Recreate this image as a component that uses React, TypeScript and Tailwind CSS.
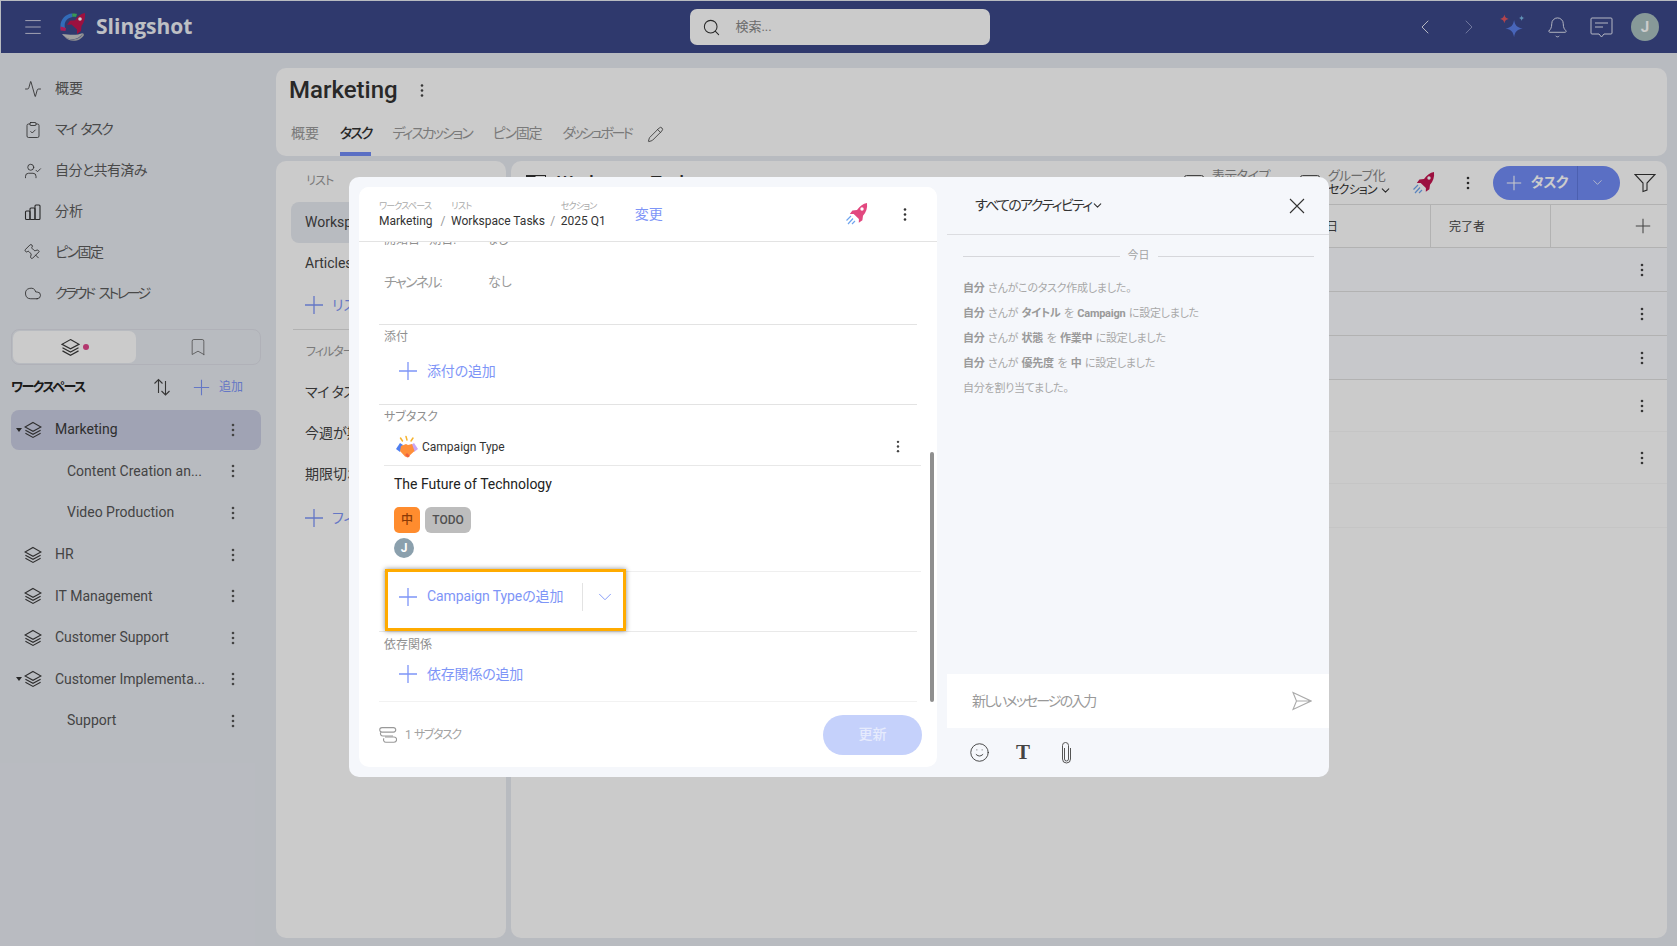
import React from "react";
import { Activity, ClipboardCheck, UserCheck, Pin, Cloud, Smile, Bell, Search, ChevronLeft, ChevronRight, ChevronDown, Pencil, Bookmark, Menu } from "lucide-react";

const Dots = ({ color = "#444", h = 14 }: { color?: string; h?: number }) => (
  <svg width="4" height={h} viewBox="0 0 4 14" className="shrink-0">
    <circle cx="2" cy="2" r="1.3" fill={color} />
    <circle cx="2" cy="7" r="1.3" fill={color} />
    <circle cx="2" cy="12" r="1.3" fill={color} />
  </svg>
);

const Plus = ({ size = 20, color = "#7e95f7" }: { size?: number; color?: string }) => (
  <svg width={size} height={size} viewBox="0 0 20 20" className="shrink-0">
    <path d="M10 1v18M1 10h18" stroke={color} strokeWidth="1.3" fill="none" />
  </svg>
);

const Layers = ({ size = 18 }: { size?: number }) => (
  <svg width={size} height={size} viewBox="0 0 18 18" fill="none" stroke="#3a3a3a" strokeWidth="1.1" className="shrink-0">
    <path d="M9 1.5 17 6 9 10.3 1 6Z" />
    <path d="M1.4 9.2 9 13.3l7.6-4.1" />
    <path d="M1.4 12.2 9 16.4l7.6-4.2" />
  </svg>
);

const Rocket = ({ body = "#e2487f" }: { body?: string }) => (
  <svg width="24" height="24" viewBox="0 0 24 24" className="shrink-0">
    <path d="M22 1c.6 5-.8 9.6-4 12.7l-.6 4.6-3.6 2.5.1-3.9-5.2-5-3.9.1 2.6-3.6 4.6-.5C15.200 4 18 1.600 22 1Z" fill={body} />
    <circle cx="17" cy="7" r="1.700" fill="#fff" />
    <path d="M6 14 1.500 18.500M8 16.500 3 22M10 19l-3 3" stroke="#6fa5ee" strokeWidth="1.200" fill="none" />
  </svg>
);

const Logo = () => (
  <svg width="28" height="30" viewBox="0 0 28 30" className="shrink-0">
    <path d="M3 22a12.500 12.500 0 0 0 21-1c-6 2.500-12 2-21 1Z" fill="#c9c9c9" />
    <path d="M5 24c6 5 15 5 19-3l1 2c-3 6-14 9-20 1Z" fill="#b5b5b5" />
    <path d="M2 18C-.5 9 6 2 13 1.500l.5 3.500C8 6 4.500 10 6 16Z" fill="#3f87e8" />
    <path d="M13 1.500c2-.3 4 0 5 .5l-1 3c-1-.4-2-.4-3.500 0Z" fill="#46c06a" />
    <path d="M1.500 14.500 7 16l-.5 3-5-.5Z" fill="#d6246e" />
    <path d="M26 1c.5 5-.8 9.600-3.500 13l-.5 5-4 3v-4.500l-5.500-5-4.500.2 3-4 5-.5C19 4 22 1.500 26 1Z" fill="#c4154f" />
    <circle cx="21" cy="7" r="1.800" fill="#fff" />
  </svg>
);

const Handshake = () => (
  <svg width="24" height="24" viewBox="0 0 24 24" className="shrink-0">
    <path d="M11 1.500 12 5M5.500 3l2 3M18 3l-2 3" stroke="#f5b32e" strokeWidth="1.500" strokeLinecap="round" />
    <path d="M1 14l4-6 3 2-3 7Z" fill="#4f7ff0" />
    <path d="M23 14l-4-6-3 2 3 7Z" fill="#c9a7f5" />
    <path d="M6 11l5-2 2 1 4-1 2.500 7-7 6.500-2.500-1L5 16Z" fill="#ff8f3a" />
    <path d="M10 20l3 2.500 2-1.500-3-3Z" fill="#f0623e" />
  </svg>
);

const NavItem = ({ icon, label, cls = "" }: { icon: React.ReactNode; label: string; cls?: string }) => (
  <div className="flex h-[41px] items-center pl-[23px] text-[14px] text-[#5c5c5c]">
    <span className="flex w-[18px] shrink-0 justify-center text-[#333]">{icon}</span>
    <span className={`ml-[13px] ${cls}`}>{label}</span>
  </div>
);

const WsRow = ({ name, caret, sub, active }: { name: string; caret?: boolean; sub?: boolean; active?: boolean }) => (
  <div className="flex h-[41.6px] items-center">
    <div className={`flex h-[40px] w-full items-center rounded-[8px] text-[14px] ${active ? "bg-[#c9cce1] text-[#3a3a3a]" : "text-[#555]"}`}>
      {sub ? (
        <span className="w-[56px] shrink-0" />
      ) : (
        <>
          <span className="flex w-[13px] shrink-0 pl-[5px]">
            {caret && (
              <svg width="6" height="4" viewBox="0 0 6 4">
                <path d="M0 0h6L3 4Z" fill="#333" />
              </svg>
            )}
          </span>
          <Layers />
          <span className="w-[13px] shrink-0" />
        </>
      )}
      <span className="flex-1 whitespace-nowrap">{name}</span>
      <span className="mr-[26px] flex w-[4px] justify-center">
        <Dots color="#555" />
      </span>
    </div>
  </div>
);

const AddRow = ({ label }: { label: string }) => (
  <div className="flex h-[36px] items-center gap-[9px] pl-[19px] text-[14px] text-[#7e95f7]">
    <Plus />
    <span className="tracking-[-0.2px]">{label}</span>
  </div>
);

const Label = ({ children }: { children: React.ReactNode }) => (
  <div className="flex h-[18px] items-center pl-[5px] text-[12px] text-[#8f8f8f]">{children}</div>
);

const Crumb = ({ top, value, cls = "" }: { top: string; value: string; cls?: string }) => (
  <div className="flex flex-col">
    <span className={`h-[15px] text-[9px] leading-[15px] text-[#aaa] ${cls}`}>{top}</span>
    <span className="text-[12px] leading-[15px] text-[#333]">{value}</span>
  </div>
);

const Tab = ({ label, active, cls = "" }: { label: string; active?: boolean; cls?: string }) => (
  <div className={`flex h-[44px] items-center border-b-4 pt-[2px] text-[14px] ${cls} ${active ? "border-[#718bf6] font-medium text-[#333]" : "border-transparent text-[#999]"}`}>
    {label}
  </div>
);

const ListItem = ({ label, active, cls = "" }: { label: string; active?: boolean; cls?: string }) => (
  <div className={`flex h-[41px] items-center rounded-[8px] pl-[14px] text-[14px] text-[#444] ${cls} ${active ? "bg-[#e7eaf1]" : ""}`}>{label}</div>
);

const TableRow = ({ h, tint, faint, dots = true }: { h: string; tint?: boolean; faint?: boolean; dots?: boolean }) => (
  <div className={`flex items-center justify-end border-b pr-[23px] ${h} ${tint ? "bg-[#f9fafe]" : ""} ${faint ? "border-[#f7f7f7]" : "border-[#dfdfdf]"}`}>
    {dots && <Dots color="#444" />}
  </div>
);

const LogLine = ({ children }: { children: React.ReactNode }) => (
  <div className="flex h-[25px] items-center whitespace-pre text-[11px] tracking-[-0.25px] text-[#a8a8a8] [word-spacing:1px]">{children}</div>
);
const B = ({ children }: { children: React.ReactNode }) => <span className="font-bold text-[#9a9a9a]">{children}</span>;

export default function App() {
  return (
    <div className="relative h-[946px] w-[1677px] overflow-hidden bg-[#e7eaf1] pl-px pt-px font-['Roboto','Noto_Sans_CJK_JP',sans-serif] [font-feature-settings:'palt']">
      {/* top bar */}
      <header className="flex h-[52px] items-center bg-[#3b4889] text-white">
        <Menu size={22} strokeWidth={1} className="ml-[21px] shrink-0 text-[#d8d8e8]" />
        <div className="ml-[15px]"><Logo /></div>
        <span className="ml-[9px] font-['Open_Sans',sans-serif] text-[21px] font-bold text-[#eef0f5]">Slingshot</span>
        <div className="ml-[498px] flex h-[36px] w-[300px] items-center rounded-[7px] bg-[#fefefe] pl-[12px]">
          <Search size={19} strokeWidth={1.3} className="text-[#333]" />
          <span className="ml-[14px] text-[13px] text-[#888]">検索...</span>
        </div>
        <div className="ml-auto flex items-center pr-[10px]">
          <span className="flex w-[44px] justify-center"><ChevronLeft size={24} strokeWidth={1} className="text-[#e4e6f3]" /></span>
          <span className="flex w-[44px] justify-center"><ChevronRight size={24} strokeWidth={1} className="text-[#8b94c4]" /></span>
          <span className="flex w-[44px] justify-center">
            <svg width="28" height="28" viewBox="0 0 26 26">
              <path d="M5 1.500c.5 2.500 1.500 3.500 4 4-2.500.5-3.500 1.500-4 4-.5-2.500-1.500-3.500-4-4 2.500-.5 3.500-1.500 4-4Z" fill="#e0555f" />
              <path d="M21 2c.3 1.700 1 2.400 2.700 2.700-1.700.3-2.400 1-2.700 2.700-.3-1.700-1-2.400-2.700-2.700C20 4.400 20.700 3.700 21 2Z" fill="#7ab8e6" />
              <path d="M14 6.500c.8 5 2.700 7 8 8-5.300 1-7.200 3-8 8-.8-5-2.700-7-8-8 5.300-1 7.200-3 8-8Z" fill="#5b7fe8" />
            </svg>
          </span>
          <span className="flex w-[44px] justify-center"><Bell size={23} strokeWidth={1} className="text-[#e4e6f3]" /></span>
          <span className="flex w-[44px] justify-center">
            <svg width="23" height="21" viewBox="0 0 23 21" fill="none" stroke="#e4e6f3" strokeWidth="1">
              <path d="M2 1h19a1 1 0 0 1 1 1v14a1 1 0 0 1-1 1h-7l-2.500 3L9 17H2a1 1 0 0 1-1-1V2a1 1 0 0 1 1-1Z" />
              <path d="M5 6h13M5 10h8" />
            </svg>
          </span>
          <span className="flex w-[44px] justify-center">
            <span className="flex h-[28px] w-[28px] items-center justify-center rounded-full bg-[#a9c0bf] text-[15px] font-bold text-white">J</span>
          </span>
        </div>
      </header>

      <div className="flex h-[893px]">
        {/* sidebar */}
        <aside className="w-[275px] shrink-0 pt-[15px]">
          <NavItem icon={<Activity size={22} strokeWidth={1.1} />} label="概要" />
          <NavItem icon={<ClipboardCheck size={22} strokeWidth={1.1} />} label="マイ タスク" cls="tracking-[-2px] [word-spacing:3px]" />
          <NavItem icon={<UserCheck size={22} strokeWidth={1.1} />} label="自分と共有済み" cls="tracking-[-0.6px]" />
          <NavItem
            icon={
              <svg width="18" height="18" viewBox="0 0 18 18" fill="none" stroke="currentColor" strokeWidth="1.100">
                <rect x="1.500" y="8" width="4.500" height="8.500" rx="1" />
                <rect x="6" y="5" width="5" height="11.500" rx="1" />
                <rect x="11" y="2" width="5" height="14.500" rx="1" />
              </svg>
            }
            label="分析"
          />
          <NavItem icon={<Pin size={21} strokeWidth={1.1} className="-rotate-45" />} label="ピン固定" cls="tracking-[-1.5px]" />
          <NavItem icon={<Cloud size={23} strokeWidth={1.1} />} label="クラウド ストレージ" cls="tracking-[-2.5px] [word-spacing:4px]" />

          <div className="ml-[10px] mr-[15px] mt-[15px] flex h-[36px] rounded-[8px] border border-[#dcdee6] p-px">
            <div className="flex w-[123px] items-center justify-center gap-[3px] rounded-[7px] bg-[#fefefe]">
              <Layers size={19} />
              <span className="h-[6px] w-[6px] rounded-full bg-[#e0458a]" />
            </div>
            <div className="flex flex-1 items-center justify-center">
              <Bookmark size={20} strokeWidth={1} className="text-[#666]" />
            </div>
          </div>

          <div className="ml-[10px] flex h-[44px] items-center">
            <span className="w-[142px] text-[13px] font-bold tracking-[-1.5px] text-[#222]">ワークスペース</span>
            <svg width="18" height="18" viewBox="0 0 18 18" fill="none" stroke="#444" strokeWidth="1.100">
              <path d="M5.500 15V1.500M1.500 5.500l4-4 4 4" />
              <path d="M12.500 3v14M8.500 13l4 4 4-4" />
            </svg>
            <span className="ml-[22px]"><Plus size={17} /></span>
            <span className="ml-[9px] text-[12px] text-[#7e95f7]">追加</span>
          </div>

          <div className="ml-[10px] mr-[15px]">
            <WsRow name="Marketing" caret active />
            <WsRow name="Content Creation an..." sub />
            <WsRow name="Video Production" sub />
            <WsRow name="HR" />
            <WsRow name="IT Management" />
            <WsRow name="Customer Support" />
            <WsRow name="Customer Implementa..." caret />
            <WsRow name="Support" sub />
          </div>
        </aside>

        {/* main */}
        <main className="flex min-w-0 flex-1 flex-col gap-[5px] pb-[8px] pr-[10px] pt-[15px]">
          <section className="h-[88px] rounded-[10px] bg-[#fefefe] px-[13px]">
            <div className="flex h-[44px] items-center">
              <span className="text-[24px] font-medium text-[#333]">Marketing</span>
              <span className="ml-[22px]"><Dots color="#444" h={15} /></span>
            </div>
            <div className="flex items-center gap-[21px] pl-[2px]">
              <Tab label="概要" />
              <Tab label="タスク" active cls="tracking-[-2px]" />
              <Tab label="ディスカッション" cls="tracking-[-2px]" />
              <Tab label="ピン固定" cls="tracking-[-1.2px]" />
              <Tab label="ダッシュボード" cls="tracking-[-2.6px]" />
              <Pencil size={17} strokeWidth={1.1} className="-ml-[5px] text-[#333]" />
            </div>
          </section>

          <div className="flex min-h-0 flex-1 gap-[5px]">
            {/* lists */}
            <section className="w-[230px] shrink-0 rounded-[10px] bg-[#fefefe] pt-[11px]">
              <div className="ml-[30px] flex h-[18px] items-center text-[12px] tracking-[-0.8px] text-[#999]">リスト</div>
              <div className="mx-[15px] mt-[12px]">
                <ListItem label="Workspace Tasks" active />
                <ListItem label="Articles" />
              </div>
              <div className="ml-[28px] mt-[1px] flex h-[40px] items-center gap-[8px] text-[14px] text-[#7e95f7]">
                <Plus size={20} /> リストの追加
              </div>
              <div className="mx-[17px] mt-[4px] border-t border-[#dfdfdf]" />
              <div className="ml-[30px] mt-[13px] flex h-[18px] items-center text-[12px] tracking-[-1px] text-[#999]">フィルター</div>
              <div className="mx-[15px] mt-[11px]">
                <ListItem label="マイ タスク" cls="tracking-[-0.6px]" />
                <ListItem label="今週が期限" />
                <ListItem label="期限切れ" />
              </div>
              <div className="ml-[28px] mt-[3px] flex h-[40px] items-center gap-[8px] text-[14px] text-[#7e95f7]">
                <Plus size={20} /> フィルターの追加
              </div>
            </section>

            {/* table */}
            <section className="min-w-0 flex-1 rounded-[10px] bg-[#fefefe]">
              <div className="flex h-[43px] items-center">
                <svg width="20" height="16" viewBox="0 0 20 16" className="ml-[15px]">
                  <rect x="0.500" y="0.500" width="19" height="15" fill="none" stroke="#333" />
                  <rect x="0.500" y="0.500" width="9" height="15" fill="#333" />
                </svg>
                <span className="ml-[11px] text-[18px] font-medium text-[#333]">Workspace Tasks</span>
                <div className="ml-auto flex items-center">
                  <svg width="20" height="16" viewBox="0 0 20 16" fill="none" stroke="#555"><rect x="0.500" y="0.500" width="19" height="15" rx="2" /></svg>
                  <span className="ml-[8px] flex flex-col text-[13px] leading-[15px] tracking-[-0.5px] text-[#888]">
                    <span>表示タイプ</span>
                    <span className="text-[#333]">テーブル</span>
                  </span>
                  <span className="ml-[30px]"><svg width="20" height="16" viewBox="0 0 20 16" fill="none" stroke="#555"><rect x="0.500" y="0.500" width="19" height="15" rx="2" /></svg></span>
                  <span className="ml-[8px] flex w-[69px] flex-col text-[13px] leading-[15px] tracking-[-0.8px] text-[#888]">
                    <span>グループ化</span>
                    <span className="flex items-center text-[12px] text-[#333]">セクション<ChevronDown size={13} className="ml-[2px]" /></span>
                  </span>
                  <span className="ml-[15px]"><Rocket body="#c4154f" /></span>
                  <span className="ml-[30px]"><Dots color="#333" /></span>
                  <div className="ml-[23px] flex h-[34px] w-[127px] items-stretch rounded-full bg-[#718bf6] text-white">
                    <div className="flex w-[85px] items-center justify-center gap-[9px] border-r border-[#5f78dc] pl-[4px] text-[14px] font-bold">
                      <Plus size={16} color="#fff" />
                      <span className="tracking-[-0.5px]">タスク</span>
                    </div>
                    <div className="flex flex-1 items-center justify-center pr-[3px]">
                      <ChevronDown size={15} strokeWidth={1.2} />
                    </div>
                  </div>
                  <svg width="22" height="20" viewBox="0 0 22 20" fill="none" stroke="#333" strokeWidth="1.100" className="ml-[14px] mr-[11px]">
                    <path d="M1 1.500h20l-8 8.500v7l-4 1.500V10Z" />
                  </svg>
                </div>
              </div>
              <div className="flex h-[44px] items-stretch border-y border-[#dfdfdf] text-[12px] text-[#444]">
                <div className="flex flex-1 items-center justify-end pr-[92px] pt-[2px]">完了日</div>
                <div className="flex w-[120px] items-center border-l border-[#dfdfdf] pl-[18px] pt-[2px]">完了者</div>
                <div className="flex w-[117px] items-center justify-end border-l border-[#dfdfdf] pr-[16px]"><Plus size={16} color="#555" /></div>
              </div>
              <TableRow h="h-[44px]" tint />
              <TableRow h="h-[44px]" tint />
              <TableRow h="h-[44px]" tint />
              <TableRow h="h-[52px]" faint />
              <TableRow h="h-[52px]" faint />
              <TableRow h="h-[44px]" faint dots={false} />
            </section>
          </div>
        </main>
      </div>

      {/* dim layer */}
      <div className="absolute inset-0 bg-black/20" />

      {/* dialog */}
      <div className="absolute left-[349px] top-[177px] flex h-[600px] w-[980px] rounded-[10px] bg-[#f5f7fb]">
        <div className="my-[10px] ml-[10px] flex w-[578px] flex-col rounded-[10px] bg-white">
          <div className="z-10 flex h-[55px] shrink-0 items-center rounded-t-[10px] border-b border-[#e3e3e3] bg-white pl-[20px] pr-[30px]">
            <Crumb top="ワークスペース" value="Marketing" cls="tracking-[-0.8px]" />
            <span className="ml-[8px] mr-[5.5px] mt-[14px] text-[12px] text-[#999]">/</span>
            <Crumb top="リスト" value="Workspace Tasks" cls="tracking-[-0.6px]" />
            <span className="mx-[5.5px] mt-[14px] text-[12px] text-[#999]">/</span>
            <Crumb top="セクション" value="2025 Q1" cls="tracking-[-0.8px]" />
            <span className="ml-[29px] text-[14px] text-[#7e95f7]">変更</span>
            <span className="ml-auto"><Rocket /></span>
            <span className="ml-[34px]"><Dots color="#333" h={15} /></span>
          </div>

          <div className="relative min-h-0 flex-1 overflow-hidden">
            <div className="px-[20px]">
              <div className="-mt-[10px] flex h-[16px] items-center pl-[5px] text-[12px] text-[#8f8f8f]">
                <span>開始日 - 期日:</span>
                <span className="ml-[30px]">なし</span>
              </div>
              <div className="h-[77px] border-b border-[#e3e3e3]">
                <div className="flex h-[68px] items-center pl-[5px] text-[14px] text-[#9a9a9a]">
                  <span className="w-[104px] tracking-[-1.5px]">チャンネル:</span>
                  <span className="text-[13px]">なし</span>
                </div>
              </div>

              <div className="h-[80px] border-b border-[#e3e3e3] pt-[3px]">
                <Label>添付</Label>
                <div className="mt-[7px]"><AddRow label="添付の追加" /></div>
              </div>

              <div className="pt-[3px]">
                <Label>サブタスク</Label>
              </div>
              <div className="-mr-[4px] ml-[5px] mt-[2px] flex h-[38px] items-center border-b border-[#e8e8e8] pl-[11px] pr-[21px] text-[12px] text-[#333]">
                <Handshake />
                <span className="ml-[3px]">Campaign Type</span>
                <span className="ml-auto"><Dots color="#444" h={13} /></span>
              </div>

              <div className="ml-[15px] mt-[9px] flex h-[18px] items-center text-[14px] text-[#222]">The Future of Technology</div>
              <div className="ml-[15px] mt-[14px] flex h-[26px] gap-[5px]">
                <span className="flex w-[26px] items-center justify-center rounded-[5px] bg-[#ff8c2e] text-[12px] font-medium text-[#8a3a06]">中</span>
                <span className="flex w-[46px] items-center justify-center rounded-[6px] bg-[#bdbdbd] text-[12px] font-medium text-[#505050]">TODO</span>
              </div>
              <div className="ml-[15px] mt-[5px] flex h-[20px] w-[20px] items-center justify-center rounded-full bg-[#8ba0ad] text-[12px] font-bold text-white">J</div>
              <div className="-mr-[4px] ml-[5px] mt-[13px] border-t border-[#efefef]" />

              <div className="relative h-[60px] border-b border-[#e9e9e9]">
                <div className="flex h-[49px] items-center pl-[19px] text-[14px] text-[#7e95f7]">
                  <Plus />
                  <span className="ml-[9px] w-[155px] tracking-[-0.1px]">Campaign Typeの追加</span>
                  <span className="h-[28px] border-l border-[#e3e3e3]" />
                  <ChevronDown size={22} strokeWidth={1} className="ml-[11px]" />
                </div>
                <div className="absolute left-[6px] top-[-3px] h-[62px] w-[241px] border-[3px] border-[#ffab00] shadow-[0_0_5px_rgba(0,0,0,0.45)]" />
              </div>

              <div className="pt-[4px]">
                <Label>依存関係</Label>
              </div>
              <div className="mt-[2px]"><AddRow label="依存関係の追加" /></div>
            </div>
            <div className="absolute bottom-0 left-[20px] right-[20px] h-px bg-[#f2f2f2]" />
            <div className="absolute right-[3px] top-[210px] h-[250px] w-[4px] rounded-full bg-[#8f8f8f]" />
          </div>

          <div className="flex h-[65px] shrink-0 items-center pl-[20px] pr-[15px]">
            <svg width="18" height="16" viewBox="0 0 18 16" fill="none" stroke="#999" strokeWidth="1.100">
              <path d="M3 .6h11.500a2.200 2.200 0 0 1 0 4.500H3A2.200 2.200 0 0 1 3 .6Z" />
              <path d="M2 5.200c-1.500 2 .2 3.800 2 3.800h10" />
              <path d="M6 10h9a2.400 2.400 0 0 1 0 5.200H7a2.400 2.400 0 0 1-2-3.800" />
            </svg>
            <span className="ml-[8px] text-[12px] tracking-[-1.4px] text-[#a3a3a3] [word-spacing:2px]">1 サブタスク</span>
            <div className="ml-auto flex h-[40px] w-[99px] items-center justify-center rounded-full bg-[#c5d1fb] text-[14px] font-medium text-[#e6ebfd]">更新</div>
          </div>
        </div>

        {/* activity */}
        <div className="ml-[10px] flex min-w-0 flex-1 flex-col">
          <div className="flex h-[58px] shrink-0 items-center border-b border-[#dcdde1] pl-[28px] pr-[24px]">
            <span className="text-[14px] tracking-[-1.7px] text-[#333]">すべてのアクティビティ</span>
            <ChevronDown size={13} className="text-[#333]" />
            <svg width="16" height="16" viewBox="0 0 16 16" fill="none" stroke="#333" strokeWidth="1.100" className="ml-auto">
              <path d="M1 1l14 14M15 1 1 15" />
            </svg>
          </div>
          <div className="min-h-0 flex-1 pl-[16px] pr-[15px]">
            <div className="mt-[13px] flex h-[16px] items-center gap-[8px]">
              <span className="h-px flex-1 bg-[#d6d7db]" />
              <span className="text-[11px] text-[#a3a3a3]">今日</span>
              <span className="h-px flex-1 bg-[#d6d7db]" />
            </div>
            <div className="mt-[13px]">
              <LogLine><B>自分</B> さんがこのタスク作成しました。</LogLine>
              <LogLine><B>自分</B> さんが <B>タイトル</B> を <B>Campaign</B> に設定しました</LogLine>
              <LogLine><B>自分</B> さんが <B>状態</B> を <B>作業中</B> に設定しました</LogLine>
              <LogLine><B>自分</B> さんが <B>優先度</B> を <B>中</B> に設定しました</LogLine>
              <LogLine>自分を割り当てました。</LogLine>
            </div>
          </div>
          <div className="flex h-[54px] shrink-0 items-center justify-between bg-white pl-[25px] pr-[17px] text-[14px] text-[#999]">
            <span className="tracking-[-1.9px]">新しいメッセージの入力</span>
            <svg width="20" height="20" viewBox="0 0 20 20" fill="none" stroke="#aaa" strokeWidth="1.100">
              <path d="M1 1.500 19 10 1 18.500 4.500 10ZM4.500 10H19" />
            </svg>
          </div>
          <div className="flex h-[49px] shrink-0 items-center pl-[22px]">
            <Smile size={21} strokeWidth={1} className="text-[#333]" />
            <span className="ml-[18px] w-[30px] text-center font-['Liberation_Serif',serif] text-[21px] font-bold leading-none text-[#444]">T</span>
            <svg width="11" height="24" viewBox="0 0 11 24" fill="none" stroke="#555" strokeWidth="1" className="ml-[23px]">
              <path d="M3.500 7v11a2 2 0 0 0 4 0V4.500a3 3 0 0 0-6 0V18a4 4 0 0 0 8 0V7" />
            </svg>
          </div>
        </div>
      </div>
    </div>
  );
}
